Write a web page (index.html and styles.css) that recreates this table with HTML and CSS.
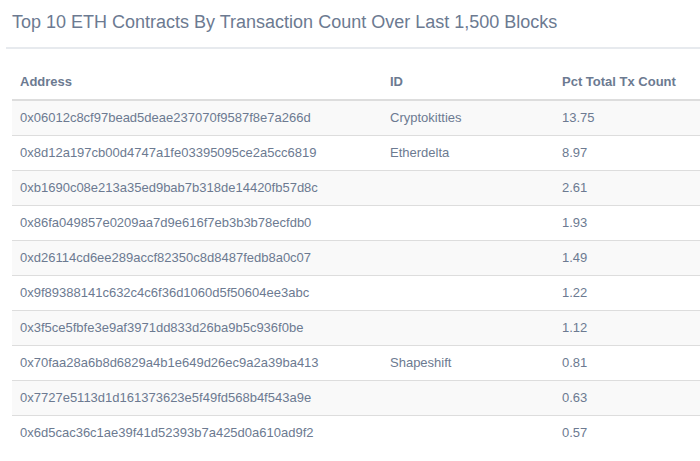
FILE: index.html
```html
<!DOCTYPE html>
<html>
<head>
<meta charset="utf-8">
<link rel="stylesheet" href="styles.css">
</head>
<body>
<div class="panel">
  <div class="panel-heading">
    <h3 class="title">Top 10 ETH Contracts By Transaction Count Over Last 1,500 Blocks</h3>
  </div>
  <div class="panel-body">
    <table class="tbl">
      <colgroup><col class="c1"><col class="c2"><col class="c3"></colgroup>
      <thead>
        <tr><th>Address</th><th>ID</th><th>Pct Total Tx Count</th></tr>
      </thead>
      <tbody>
        <tr><td>0x06012c8cf97bead5deae237070f9587f8e7a266d</td><td>Cryptokitties</td><td>13.75</td></tr>
        <tr><td>0x8d12a197cb00d4747a1fe03395095ce2a5cc6819</td><td>Etherdelta</td><td>8.97</td></tr>
        <tr><td>0xb1690c08e213a35ed9bab7b318de14420fb57d8c</td><td></td><td>2.61</td></tr>
        <tr><td>0x86fa049857e0209aa7d9e616f7eb3b3b78ecfdb0</td><td></td><td>1.93</td></tr>
        <tr><td>0xd26114cd6ee289accf82350c8d8487fedb8a0c07</td><td></td><td>1.49</td></tr>
        <tr><td>0x9f89388141c632c4c6f36d1060d5f50604ee3abc</td><td></td><td>1.22</td></tr>
        <tr><td>0x3f5ce5fbfe3e9af3971dd833d26ba9b5c936f0be</td><td></td><td>1.12</td></tr>
        <tr><td>0x70faa28a6b8d6829a4b1e649d26ec9a2a39ba413</td><td>Shapeshift</td><td>0.81</td></tr>
        <tr><td>0x7727e5113d1d161373623e5f49fd568b4f543a9e</td><td></td><td>0.63</td></tr>
        <tr><td>0x6d5cac36c1ae39f41d52393b7a425d0a610ad9f2</td><td></td><td>0.57</td></tr>
      </tbody>
    </table>
  </div>
</div>
</body>
</html>
```
FILE: styles.css
```css
html, body {
  margin: 0;
  padding: 0;
  background: #ffffff;
}
body {
  font-family: "Liberation Sans", Arial, sans-serif;
  color: #6c7a91;
  overflow: hidden;
}
.panel {
  padding-left: 6px;
}
.panel-heading {
  border-bottom: 2px solid #e7eaee;
  padding: 10px 0 12px 6px;
}
.title {
  margin: 0;
  font-size: 18px;
  font-weight: normal;
  line-height: 25px;
  color: #6c7a91;
}
.panel-body {
  padding: 16px 0 0 6px;
}
.tbl {
  border-collapse: collapse;
  width: 700px;
  font-size: 13px;
  line-height: 18px;
}
.c1 { width: 370px; }
.c2 { width: 172px; }
.c3 { width: 158px; }
.tbl th {
  text-align: left;
  font-weight: bold;
  padding: 8px;
  border-bottom: 2px solid #dddddd;
}
.tbl td {
  padding: 8px;
  border-top: 1px solid #dddddd;
  white-space: nowrap;
}
.tbl tbody tr:first-child td {
  border-top: 0;
}
.tbl tbody tr:nth-child(odd) {
  background: #f9f9f9;
}
```
